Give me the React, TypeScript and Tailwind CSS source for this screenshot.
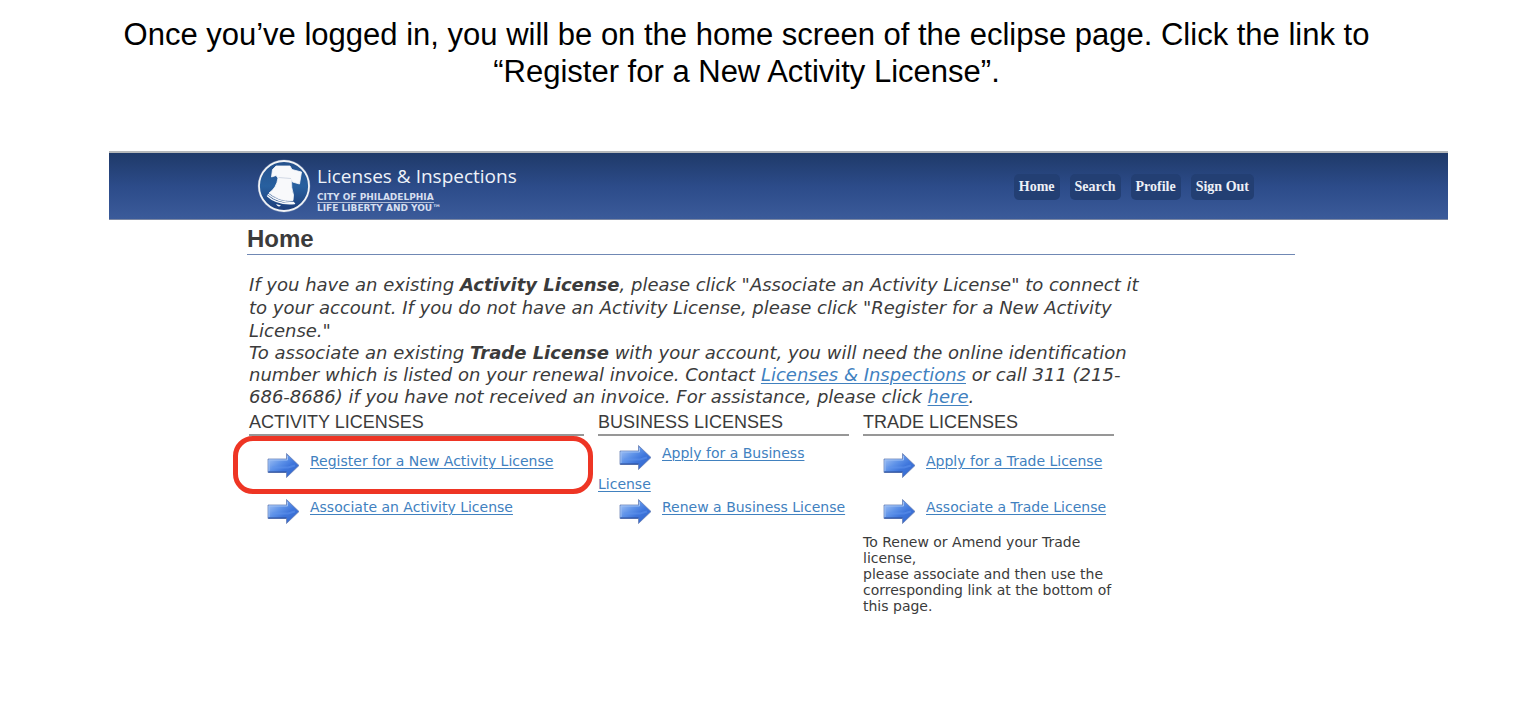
import type { ReactNode } from "react"

const NAV_ITEMS = ["Home", "Search", "Profile", "Sign Out"]

function ArrowIcon({ id }: { id: string }) {
  return (
    <svg viewBox="0 0 33 27" className="mr-[10px] inline-block h-[27px] w-[33px] align-[-13px]" aria-hidden="true">
      <defs>
        <linearGradient id={id} x1="0" y1="0" x2="1" y2="1">
          <stop offset="0" stopColor="#b4cff8" />
          <stop offset="0.4" stopColor="#5e92e8" />
          <stop offset="0.6" stopColor="#3f76dc" />
          <stop offset="1" stopColor="#3163c6" />
        </linearGradient>
      </defs>
      <path
        d="M1 7H19.5V1.5L32 13.5L19.5 25.5V20.5H1Z"
        fill={`url(#${id})`}
        stroke="#6b80b4"
        strokeWidth="0.8"
        strokeLinejoin="round"
      />
      <path d="M2 19V8H20.5V4" fill="none" stroke="#9dbff3" strokeWidth="1" />
      <path d="M5 15.500H21L28 13.500" fill="none" stroke="#5f94ee" strokeWidth="2" opacity="0.5" />
      <path d="M1.500 20H19.500" fill="none" stroke="#2d4f99" strokeWidth="1" />
    </svg>
  )
}

function BellLogo() {
  return (
    <svg viewBox="0 0 54 54" className="h-[54px] w-[54px] shrink-0" aria-hidden="true">
      <defs>
        <linearGradient id="seal" x1="0" y1="0" x2="0" y2="1">
          <stop offset="0" stopColor="#24508b" />
          <stop offset="0.5" stopColor="#28609f" />
          <stop offset="1" stopColor="#1d3c78" />
        </linearGradient>
      </defs>
      <circle cx="27" cy="27" r="26.4" fill="#8ba0c0" opacity="0.5" />
      <circle cx="27" cy="27" r="25" fill="url(#seal)" stroke="#f1f3f6" strokeWidth="1.8" />
      <path
        d="M15.500 10.500L19 7H33L35 10.500L44.500 13L42.500 25L35.500 23L34.500 19.500Q34 29 36.500 36L36 41.500Q23 43 12 34Q19.500 29 21 19L19 16.500L14.500 18Z"
        fill="#f8f9fb"
        stroke="#f8f9fb"
        strokeWidth="0.8"
        strokeLinejoin="round"
      />
      <path d="M11.500 35.500Q21 43.500 36.500 43.500" fill="none" stroke="#f8f9fb" strokeWidth="1.6" strokeLinecap="round" />
      <path d="M10.500 37Q20 46 37.500 44.500" fill="none" stroke="#f8f9fb" strokeWidth="1.400" strokeLinecap="round" />
      <path d="M21.500 18.500L34 19.500" stroke="#c6cfde" strokeWidth="0.8" />
      <path d="M19 45Q21 49 24 46.500" fill="#f8f9fb" />
    </svg>
  )
}

function TextLink({ children }: { children: ReactNode }) {
  return (
    <a href="#" className="text-[#4181bf] underline decoration-1 underline-offset-2">
      {children}
    </a>
  )
}

interface LicenseColumnProps {
  title: string
  // classes for the first row; a wrapping link starts higher in its cell
  firstRow: string
  indent: string
  links: string[]
  highlightFirst?: boolean
  children?: ReactNode
}

function LicenseColumn({ title, firstRow, indent, links, highlightFirst, children }: LicenseColumnProps) {
  return (
    <section>
      <h2 className="border-b-2 border-[#979797] font-['Liberation_Sans',sans-serif] text-[18px] leading-6 whitespace-nowrap">
        {title}
      </h2>
      <ul className="text-[14px] leading-[27px]">
        {links.map((link, i) => (
          <li key={link} className={i === 0 ? `relative h-[58px] ${firstRow}` : "h-10"}>
            {highlightFirst && i === 0 && (
              <span className="pointer-events-none absolute top-0 -right-[9px] bottom-0 -left-4 rounded-[20px] border-[5px] border-[#ee3524]" />
            )}
            <p className={indent}>
              <ArrowIcon id={`${title.slice(0, 1)}-${i}`} />
              <TextLink>{link}</TextLink>
            </p>
          </li>
        ))}
      </ul>
      {children}
    </section>
  )
}

export default function App() {
  return (
    <div className="bg-white pr-[88px] pl-[109px] font-['DejaVu_Sans',sans-serif] text-[#3b3b3b]">
      <p className="mr-16 pt-4 text-center font-['Liberation_Sans',sans-serif] text-[31px] leading-[37px] text-black">
        Once you’ve logged in, you will be on the home screen of the eclipse page. Click the link to
        “Register for a New Activity License”.
      </p>

      <header className="mt-[61px] flex items-center justify-between border-t-2 border-b border-t-[#b5b8ba] border-b-[#7c88a3] bg-linear-to-b from-[#1f3a69] via-[#2c4b89] via-50% to-[#3b5b9a] pr-[194px] pl-[148px]">
        <a href="#" className="flex items-center gap-[6px] py-[6px] text-white">
          <BellLogo />
          <span className="flex flex-col items-start pt-1">
            <span className="font-['Open_Sans',sans-serif] text-[19px] leading-6 font-medium text-[#eef2f9]">
              Licenses &amp; Inspections
            </span>
            <span className="mt-1 border-b border-[#aebbd6] text-[9px] leading-[10px] font-bold text-[#d5deef]">
              CITY OF PHILADELPHIA
            </span>
            <span className="text-[9px] leading-[10px] font-bold text-[#d5deef]">LIFE LIBERTY AND YOU™</span>
          </span>
        </a>
        <nav className="flex gap-[10px] pt-px font-['Liberation_Serif',serif] text-[14px] leading-[26px] font-bold text-[#edf0f7]">
          {NAV_ITEMS.map((item) => (
            <a key={item} href="#" className="rounded-[5px] bg-[#233f73] px-[5px]">
              {item}
            </a>
          ))}
        </nav>
      </header>

      <main className="mr-[153px] ml-[138px]">
        <h1 className="border-b border-[#7088b4] pt-1 font-['Liberation_Sans',sans-serif] text-[24px] leading-[30px] font-bold">
          Home
        </h1>

        <div className="mt-[18px] ml-[2px] max-w-[906px] text-[18px] italic">
          <p className="leading-[23px]">
            If you have an existing <strong>Activity License</strong>, please click "Associate an Activity License" to
            connect it to your account. If you do not have an Activity License, please click "Register for a New
            Activity License."
          </p>
          <p className="leading-[22px]">
            To associate an existing <strong>Trade License</strong> with your account, you will need the online
            identification number which is listed on your renewal invoice. Contact{" "}
            <TextLink>Licenses &amp; Inspections</TextLink> or call 311 (215-686-8686) if you have not received an
            invoice. For assistance, please click <TextLink>here</TextLink>.
          </p>
        </div>

        <div className="mt-[2px] ml-[2px] grid max-w-[865px] grid-cols-[335fr_251fr_251fr] gap-[14px]">
          <LicenseColumn
            title="ACTIVITY LICENSES"
            firstRow="pt-3"
            indent="indent-[18px]"
            links={["Register for a New Activity License", "Associate an Activity License"]}
            highlightFirst
          />
          <LicenseColumn
            title="BUSINESS LICENSES"
            firstRow="pt-1"
            indent="indent-[21px]"
            links={["Apply for a Business License", "Renew a Business License"]}
          />
          <LicenseColumn
            title="TRADE LICENSES"
            firstRow="pt-3"
            indent="indent-[20px]"
            links={["Apply for a Trade License", "Associate a Trade License"]}
          >
            <p className="text-[14px] leading-4">
              To Renew or Amend your Trade license,
              <br />
              please associate and then use the corresponding link at the bottom of this page.
            </p>
          </LicenseColumn>
        </div>
      </main>
    </div>
  )
}
